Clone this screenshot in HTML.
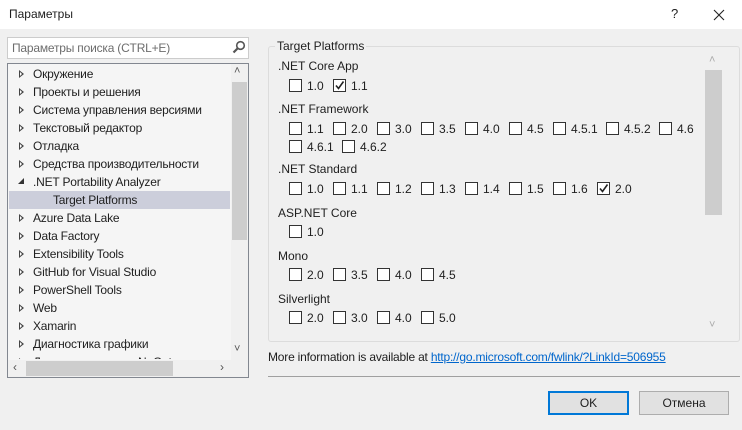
<!DOCTYPE html>
<html><head><meta charset="utf-8"><style>
*{margin:0;padding:0;box-sizing:border-box}
body{width:742px;height:430px;background:#f0f0f0;font-family:"Liberation Sans",sans-serif;font-size:12px;color:#1e1e1e;position:relative;overflow:hidden}
.a{position:absolute;white-space:nowrap}
.cb{position:absolute;width:13px;height:13px;border:1px solid #333;background:#fff}
.lbl{position:absolute;line-height:14px}
.tri{position:absolute;width:0;height:0;border-top:4px solid transparent;border-bottom:4px solid transparent;border-left:5px solid #444}
.tri::after{content:"";position:absolute;left:-4px;top:-2px;border-top:2px solid transparent;border-bottom:2px solid transparent;border-left:2.5px solid #fff}
</style></head><body>
<div class="a" style="left:0;top:0;width:742px;height:29px;background:#fff"></div>
<div class="a" style="left:9px;top:7px;font-size:12px">Параметры</div>
<div class="a" style="left:671px;top:6px;font-size:13px">?</div>
<svg class="a" style="left:713px;top:9px" width="12" height="12"><path d="M1 1L11 11M11 1L1 11" stroke="#222" stroke-width="1.1"/></svg>

<div class="a" style="left:7px;top:37px;width:242px;height:22px;background:#fff;border:1px solid #ccc"></div>
<div class="a" style="left:12px;top:41px;color:#6d6d6d;letter-spacing:-0.2px">Параметры поиска (CTRL+E)</div>
<svg class="a" style="left:232px;top:40px" width="14" height="14"><circle cx="8.5" cy="5.5" r="3.8" fill="none" stroke="#555" stroke-width="1.6"/><path d="M6 8L1.5 12.5" stroke="#555" stroke-width="2.2"/></svg>

<div class="a" style="left:7px;top:63px;width:242px;height:315px;background:#f5f5f5;border:1px solid #828790;overflow:hidden">
 <div class="a" style="left:1px;top:127px;width:221px;height:18px;background:#cccedb"></div>
 <div class="a" style="left:223px;top:0;width:17px;height:296px;background:#f0f0f0"></div>
 <div class="a" style="left:224px;top:18px;width:15px;height:158px;background:#cdcdcd"></div>
 <div class="a" style="left:226px;top:1px;font-size:11px;color:#555">&#708;</div>
 <div class="a" style="left:226px;top:279px;font-size:11px;color:#555">&#709;</div>
 <div class="a" style="left:0;top:296px;width:240px;height:17px;background:#f0f0f0"></div>
 <div class="a" style="left:18px;top:297px;width:147px;height:15px;background:#cdcdcd"></div>
 <div class="a" style="left:5px;top:296px;font-size:12px;color:#555">&#8249;</div>
 <div class="a" style="left:212px;top:296px;font-size:12px;color:#555">&#8250;</div>
</div>
<div class="a" style="left:8px;top:64px;width:222px;height:295px;overflow:hidden;letter-spacing:-0.2px">
 <div class="tri" style="left:11px;top:6px"></div><div class="a" style="left:25px;top:3px">Окружение</div>
 <div class="tri" style="left:11px;top:24px"></div><div class="a" style="left:25px;top:21px">Проекты и решения</div>
 <div class="tri" style="left:11px;top:42px"></div><div class="a" style="left:25px;top:39px">Система управления версиями</div>
 <div class="tri" style="left:11px;top:60px"></div><div class="a" style="left:25px;top:57px">Текстовый редактор</div>
 <div class="tri" style="left:11px;top:78px"></div><div class="a" style="left:25px;top:75px">Отладка</div>
 <div class="tri" style="left:11px;top:96px"></div><div class="a" style="left:25px;top:93px">Средства производительности</div>
 <svg class="a" style="left:10px;top:114px" width="7" height="7"><path d="M6 0L6 6L0 6Z" fill="#333"/></svg><div class="a" style="left:25px;top:111px">.NET Portability Analyzer</div>
 <div class="a" style="left:45px;top:129px">Target Platforms</div>
 <div class="tri" style="left:11px;top:150px"></div><div class="a" style="left:25px;top:147px">Azure Data Lake</div>
 <div class="tri" style="left:11px;top:168px"></div><div class="a" style="left:25px;top:165px">Data Factory</div>
 <div class="tri" style="left:11px;top:186px"></div><div class="a" style="left:25px;top:183px">Extensibility Tools</div>
 <div class="tri" style="left:11px;top:204px"></div><div class="a" style="left:25px;top:201px">GitHub for Visual Studio</div>
 <div class="tri" style="left:11px;top:222px"></div><div class="a" style="left:25px;top:219px">PowerShell Tools</div>
 <div class="tri" style="left:11px;top:240px"></div><div class="a" style="left:25px;top:237px">Web</div>
 <div class="tri" style="left:11px;top:258px"></div><div class="a" style="left:25px;top:255px">Xamarin</div>
 <div class="tri" style="left:11px;top:276px"></div><div class="a" style="left:25px;top:273px">Диагностика графики</div>
 <div class="tri" style="left:11px;top:294px"></div><div class="a" style="left:25px;top:291px">Диспетчер пакетов NuGet</div>
</div>

<div class="a" style="left:268px;top:46px;width:472px;height:296px;border:1px solid #dcdcdc;border-radius:3px"></div>
<div class="a" style="left:275px;top:39px;background:#f0f0f0;padding:0 2px">Target Platforms</div>
<div class="a" style="left:705px;top:70px;width:17px;height:145px;background:#cdcdcd"></div>
<div class="a" style="left:709px;top:54px;font-size:11px;color:#aaa">&#708;</div>
<div class="a" style="left:709px;top:319px;font-size:11px;color:#aaa">&#709;</div>

<div id="g"></div>

<div class="a" style="left:268px;top:350px;letter-spacing:-0.2px">More information is available at <span style="color:#0066cc;text-decoration:underline">http://go.microsoft.com/fwlink/?LinkId=506955</span></div>
<div class="a" style="left:268px;top:376px;width:472px;height:1px;background:#a0a0a0"></div>
<div class="a" style="left:548px;top:391px;width:81px;height:24px;border:2px solid #0078d7;background:#e1e1e1;text-align:center;line-height:20px">OK</div>
<div class="a" style="left:639px;top:391px;width:90px;height:24px;border:1px solid #adadad;background:#e1e1e1;text-align:center;line-height:22px">Отмена</div>
<script>
var g=document.getElementById('g'),h='';
var xs=[289,333,377,421,465,509,553,606,659];
var st=[289,333,377,421,465,509,553,597];
function hd(t,y){h+='<div class="a" style="left:278px;top:'+(y-7)+'px">'+t+'</div>';}
function row(labels,y,chk,px){labels.forEach(function(l,i){var x=px?px[i]:xs[i];h+='<div class="cb" style="left:'+x+'px;top:'+(y-7)+'px">'+(chk==i?'<svg width="11" height="11" style="position:absolute;left:0;top:0"><path d="M2 5.5L4.5 8.5L9.5 1.5" stroke="#222" stroke-width="1.6" fill="none"/></svg>':'')+'</div><div class="lbl" style="left:'+(x+18)+'px;top:'+(y-7)+'px">'+l+'</div>';});}
hd('.NET Core App',66);row(['1.0','1.1'],86,1);
hd('.NET Framework',109);row(['1.1','2.0','3.0','3.5','4.0','4.5','4.5.1','4.5.2','4.6'],129,-1);
row(['4.6.1','4.6.2'],147,-1,[289,342]);
hd('.NET Standard',169);row(['1.0','1.1','1.2','1.3','1.4','1.5','1.6','2.0'],189,7,st);
hd('ASP.NET Core',213);row(['1.0'],232,-1);
hd('Mono',256);row(['2.0','3.5','4.0','4.5'],275,-1);
hd('Silverlight',299);row(['2.0','3.0','4.0','5.0'],318,-1);
g.innerHTML=h;
</script>
</body></html>
